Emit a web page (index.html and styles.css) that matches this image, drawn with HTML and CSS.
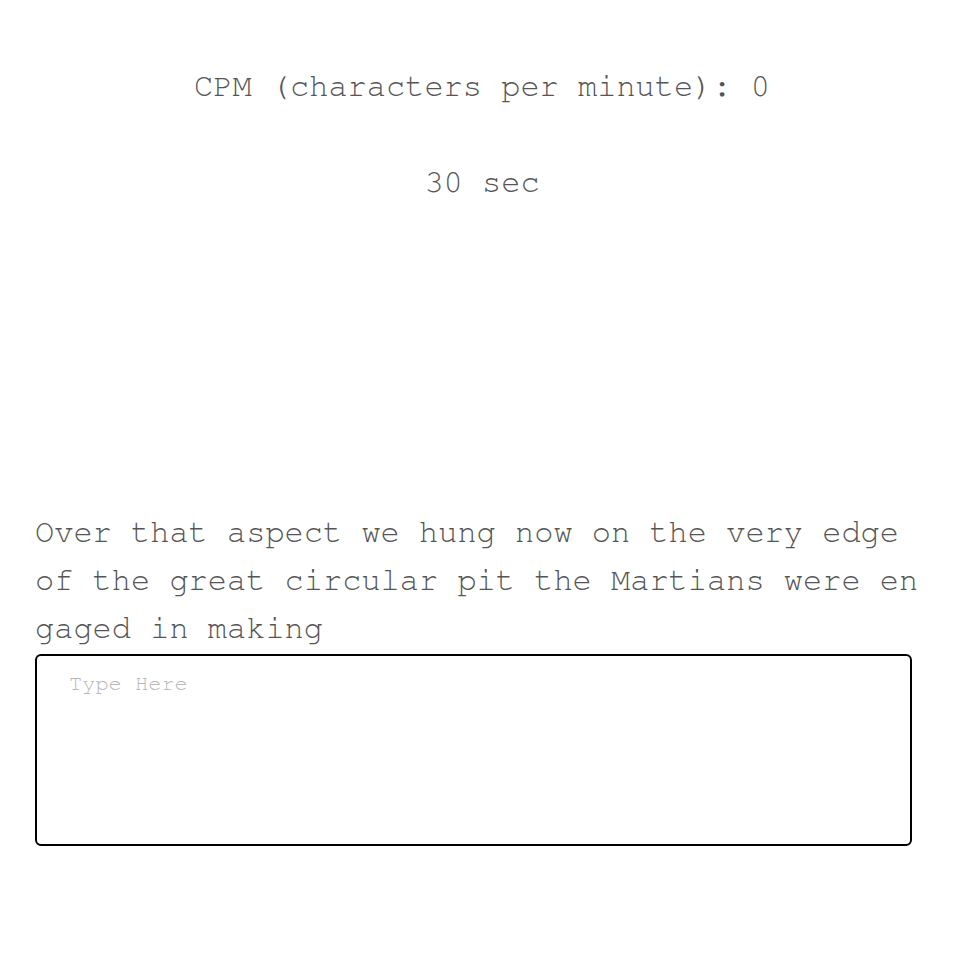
FILE: index.html
```html
<!DOCTYPE html>
<html>
<head>
<meta charset="utf-8">
<link rel="stylesheet" href="styles.css">
</head>
<body>
<main class="app">
  <section class="stats">
    <p class="cpm">CPM (characters per minute): 0</p>
    <p class="timer">30 sec</p>
  </section>
  <section class="typing">
    <p class="quote">Over that aspect we hung now on the very edge of the great circular pit the Martians were engaged in making</p>
    <textarea class="input" placeholder="Type Here"></textarea>
  </section>
</main>
</body>
</html>
```
FILE: styles.css
```css
html, body {
  margin: 0;
  padding: 0;
  background: #ffffff;
}
.app {
  font-family: FreeMono, "Liberation Mono", monospace;
  color: #555555;
  padding: 62px 35px 0 35px;
}
.stats {
  display: flex;
  flex-direction: column;
  align-items: center;
  gap: 48px;
  padding-left: 8px;
}
.stats p {
  margin: 0;
  font-size: 32px;
  line-height: 48px;
}
.typing {
  margin-top: 302px;
  display: flex;
  flex-direction: column;
  gap: 2px;
}
.quote {
  margin: 0;
  font-size: 32px;
  line-height: 48px;
  width: 886px;
  word-break: break-all;
}
.input {
  box-sizing: border-box;
  width: 877px;
  height: 192px;
  border: 2px solid #000000;
  border-radius: 6px;
  padding: 16px 32px;
  font-family: FreeMono, "Liberation Mono", monospace;
  font-size: 22px;
  color: #333;
  resize: none;
  outline: none;
  display: block;
  margin: 0;
}
.input::placeholder {
  color: #b8b8b8;
}
```
